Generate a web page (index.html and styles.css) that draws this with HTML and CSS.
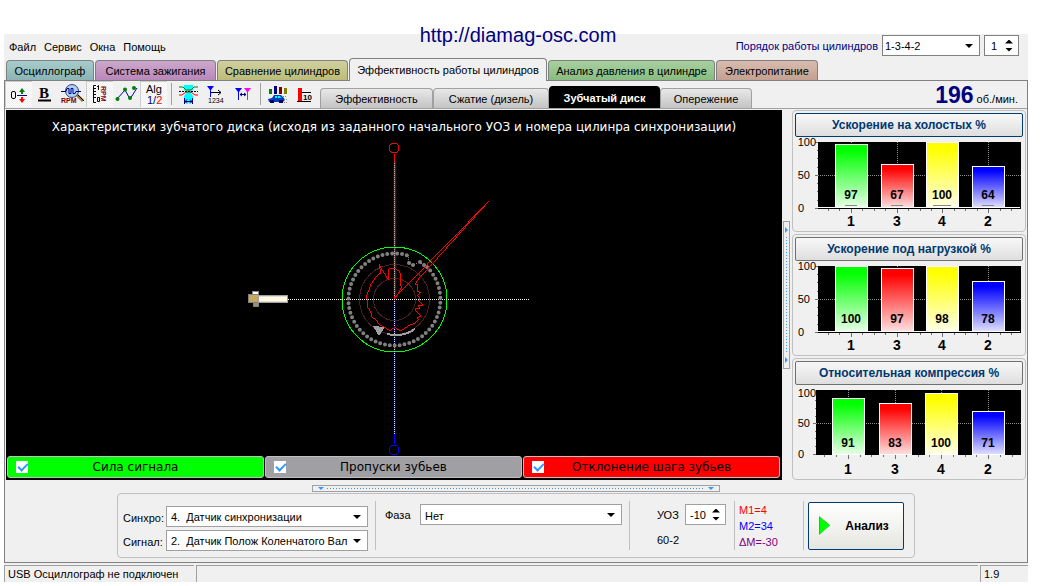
FILE: index.html
```html
<!DOCTYPE html>
<html lang="ru">
<head>
<meta charset="utf-8">
<title>Диагностика двигателя</title>
<link rel="stylesheet" href="styles.css">
</head>
<body>
<a class="site-link" href="http://diamag-osc.com">http://diamag-osc.com</a>
<div class="window">
  <header class="menubar">
    <nav class="menu"><button>Файл</button><button>Сервис</button><button>Окна</button><button>Помощь</button></nav>
    <div class="order">
      <label class="order-label" for="order">Порядок работы цилиндров</label>
      <span class="combo combo-order"><select id="order"><option>1-3-4-2</option></select></span>
      <span class="spin spin-small"><input aria-label="Номер цилиндра" value="1"><span class="steps"><button aria-label="Больше"></button><button class="down" aria-label="Меньше"></button></span></span>
    </div>
  </header>
  <nav class="tabs">
    <button class="tab teal">Осциллограф</button>
    <button class="tab purple">Система зажигания</button>
    <button class="tab olive">Сравнение цилиндров</button>
    <button class="tab current">Эффективность работы цилиндров</button>
    <button class="tab green">Анализ давления в цилиндре</button>
    <button class="tab brown">Электропитание</button>
  </nav>
  <main class="frame">
    <div class="toolbar">
      <div class="tools">
        <button class="tool pressed" aria-label="Ноль"><svg viewBox="0 0 27 26"><g fill="none" stroke="#000"><rect x="6.500" y="10.500" width="4" height="7" rx="1.500"/></g><path d="M12 14.500h10" stroke="#000080"/><path d="M14 11l3-4 3 4h-2v2h-2v-2z" fill="#008000"/><path d="M14 18l3 4 3-4h-2v-2h-2v2z" fill="#f00"/></svg></button>
        <button class="tool" aria-label="Жирный"><svg viewBox="0 0 27 26"><text class="icon-bold" x="7" y="17">B</text><path d="M6 19.500h13" stroke="#000" stroke-width="2"/></svg></button>
        <button class="tool" aria-label="Обороты"><svg viewBox="0 0 27 26"><path d="M18 14l6 6" stroke="#a08020" stroke-width="3"/><path d="M19 14l6 6" stroke="#000" /><circle cx="13" cy="10" r="6.500" fill="#a8d0ff" stroke="#404060"/><path d="M2 10.500h5l1-3h2v5h2v-5h2v5h2l1-2h5" fill="none" stroke="#000080"/><text class="icon-rpm" x="2" y="22">RPM</text></svg></button>
        <button class="tool pressed" aria-label="Шкала оборотов"><svg viewBox="0 0 27 26"><path d="M10 4.500H7.500v17H10M8 7.500h2M8 10.500h2M8 13.500h2M8 16.500h2" fill="none" stroke="#000"/><path d="M11 6l1.500-1.500V9M11.500 16.500h2v4h-2z" fill="none" stroke="#000"/><text class="icon-rpm" transform="translate(15 5) rotate(90)">RPM</text></svg></button>
        <button class="tool" aria-label="График"><svg viewBox="0 0 27 26"><path d="M4 18l8-9 5 9 7-11" fill="none" stroke="#0000c0"/><g fill="#008000"><circle cx="4.500" cy="18" r="2"/><circle cx="12" cy="8.500" r="2"/><circle cx="17" cy="17" r="2"/><circle cx="21" cy="7" r="2"/></g></svg></button>
        <button class="tool pressed" aria-label="Алгоритм"><svg viewBox="0 0 27 26"><text class="icon-alg" x="6" y="12">Alg</text><text class="icon-alg navy" x="7" y="23">1/<tspan fill="#f00">2</tspan></text></svg></button>
        <i class="divider"></i>
        <button class="tool" aria-label="Интервал"><svg viewBox="0 0 27 26"><path d="M9 4h9v5l-2 3 2 3v7H9v-7l2-3-2-3z" fill="#0ff"/><path d="M4 6h4l3 3h5l3-3h4" fill="none" stroke="#008000"/><path d="M4 10.500h19" stroke="#000" stroke-dasharray="2 1"/><path d="M4 14h3l4-3h5l4 3h3" fill="none" stroke="#f00"/><path d="M9.500 17v6M17.500 17v6M10 20.500h7M12 18.500l-2 2 2 2M15 18.500l2 2-2 2" fill="none" stroke="#000080"/></svg></button>
        <button class="tool" aria-label="Нумерация"><svg viewBox="0 0 27 26"><path d="M5 5h7l-3 4v7H8V9z" fill="#00f"/><path d="M9 11.500h10M16 9l3 2.500-3 2.500" fill="none" stroke="#000"/><text class="icon-num" x="6" y="22">1234</text></svg></button>
        <button class="tool" aria-label="Расстояние"><svg viewBox="0 0 27 26"><path d="M6 7h7l-3 4v8H9v-8z" fill="#00f"/><path d="M15 7h7l-3 4v8h-1v-8z" fill="#f0f"/><path d="M11 13.500h6M13 12l-2 1.500 2 1.500M15 12l2 1.500-2 1.500" stroke="#000080" fill="none"/></svg></button>
        <i class="divider"></i>
        <button class="tool" aria-label="Автомобиль"><svg viewBox="0 0 27 26"><path d="M5 8h3v5H5z" fill="#008000"/><path d="M10 5h3v8h-3z" fill="#000080"/><path d="M15 6h3v7h-3z" fill="#800000"/><path d="M20 7h3v6h-3z" fill="#808000"/><path d="M4 18l4-1 2-3h7l3 3 1 2-2 2H5z" fill="#0040c0"/><path d="M11 15h2v2h-2zm3 0h2l1 2h-3z" fill="#0ff"/><path d="M6 19h4v3H6zm9 0h4v3h-4z" fill="#000060"/><path d="M19 15.500h4M20 18.500h4M20 21.500h4" stroke="#888" stroke-dasharray="1 1"/></svg></button>
        <button class="tool" aria-label="Уровень"><svg viewBox="0 0 27 26"><path d="M7 7h4v13H7z" fill="#f00"/><path d="M11 11.500h9M6 20.500h14" stroke="#000"/><text class="icon-ten" x="12" y="19">10</text></svg></button>
      </div>
      <nav class="subtabs">
        <button class="subtab">Эффективность</button>
        <button class="subtab">Сжатие (дизель)</button>
        <button class="subtab selected">Зубчатый диск</button>
        <button class="subtab">Опережение</button>
      </nav>
      <output class="rpm"><b>196</b> об./мин.</output>
    </div>
    <div class="work">
      <section class="scope">
        <h1>Характеристики зубчатого диска (исходя из заданного начального УОЗ и номера цилинра синхронизации)</h1>
        <svg class="disk" viewBox="246 138 296 318" role="img" aria-label="Зубчатый диск" shape-rendering="crispEdges" fill="none">
          <circle cx="394.500" cy="299.500" r="35" stroke="#482020"/>
          <circle cx="394.500" cy="299.500" r="21" stroke="#482020"/>
          <circle cx="394.500" cy="299.500" r="52.500" stroke="#0f0"/>
          <path d="M394.500 154v145" stroke="#f00"/>
          <path d="M394.500 163v136" stroke="#0ff" stroke-dasharray="1 1"/>
          <path d="M394.500 299v145" stroke="#00f"/>
          <path d="M394.500 299v136" stroke="#ff0" stroke-dasharray="1 1"/>
          <path d="M288 299.500h242" stroke="#fff" stroke-dasharray="1 1"/>
          <circle cx="394" cy="148" r="5" stroke="#f00"/>
          <circle cx="394" cy="450" r="5" stroke="#00f"/>
          <path d="M427 267A46 46 0 1 1 407.600 255.400" stroke="#808080" stroke-width="4" stroke-linecap="round" stroke-dasharray="0 4.900" shape-rendering="auto"/>
          <path d="M408 255l1 8 4 2 7-3 4 3" stroke="#808080" stroke-dasharray="1 1"/>
          <path d="M409 263h.1M413 265h.1M420 262h.1M424 265h.1" stroke="#808080" stroke-width="4" stroke-linecap="round" shape-rendering="auto"/>
          <path d="M415 329c-8 6-18 7-28 5" stroke="#a0a0a4" stroke-width="2"/>
          <path d="M373 326l12 1-6 9z" fill="#a0a0a4"/>
          <g transform="translate(330 235) scale(.33333)"><polyline stroke="#f00" stroke-width="3" points="194,192 207,172 215,155 210,150 212,118 207,108 196,101 176,101 176,136 152,97 148,86 152,115 145,118 133,132 122,150 112,178 108,185 114,200 114,218 122,232 126,245 140,258 150,270 165,278 180,286 195,278 210,288 225,280 240,270 255,265 265,255 262,248 272,243 254,222 270,222 264,212 280,210 266,197 270,190 262,182 272,172 262,170 263,150 256,150 262,136 477,-102 194,188"/></g>
          <path d="M252 291h6v3h-6z" fill="#fff" stroke="#888"/>
          <path d="M248.500 294.500h10v8h-10z" fill="#c8a860" stroke="#808080"/>
          <path d="M253.500 302.500h5v4h-5z" fill="#a09070" stroke="#808080"/>
          <path d="M258.500 295.500h29v7h-29z" fill="#fffae0" stroke="#a0a0a0"/>
          <path d="M259 296.500h28M259 301.500h28" stroke="#ddd"/>
        </svg>
        <div class="legend">
          <label class="signal"><input type="checkbox" checked><span>Сила сигнала</span></label>
          <label class="gaps"><input type="checkbox" checked><span>Пропуски зубьев</span></label>
          <label class="pitch"><input type="checkbox" checked><span>Отклонение шага зубьев</span></label>
        </div>
      </section>
      <div class="splitter-v"><i></i></div>
      <aside class="charts">
        <section class="card">
          <button class="card-title focus">Ускорение на холостых %</button>
          <svg class="chart" viewBox="0 0 228 92" role="img" aria-label="Ускорение на холостых">
            <defs>
              <linearGradient id="g" x2="0" y2="1"><stop offset=".1" stop-color="#0f0"/><stop offset="1" stop-color="#e8ffe8"/></linearGradient>
              <linearGradient id="r" x2="0" y2="1"><stop offset=".1" stop-color="#f00"/><stop offset="1" stop-color="#ffe0e0"/></linearGradient>
              <linearGradient id="y" x2="0" y2="1"><stop offset=".1" stop-color="#ff0"/><stop offset="1" stop-color="#ffffe8"/></linearGradient>
              <linearGradient id="b" x2="0" y2="1"><stop offset=".1" stop-color="#00f"/><stop offset="1" stop-color="#e0e0ff"/></linearGradient>
              <g id="axes"><path d="M23 3h203v67H23z"/><path d="M23 36.500h203M56.500 3v66M102.500 3v66M147.500 3v66M193.500 3v66" class="grid"/><path d="M20 3.500h3M20 36.500h3M20 69.500h3M22 11.500h1M22 19.500h1M22 28.500h1M22 44.500h1M22 52.500h1M22 61.500h1M33.500 70v2M44.500 70v2M56.500 70v4M67.500 70v2M79.500 70v2M90.500 70v2M102.500 70v4M113.500 70v2M125.500 70v2M136.500 70v2M147.500 70v4M159.500 70v2M170.500 70v2M182.500 70v2M193.500 70v4M205.500 70v2M216.500 70v2" class="ticks"/><path d="M23 68.500h202" stroke="#fff"/></g>
              <g id="scale" class="scale"><text x="21" y="7">100</text><text x="15" y="40">50</text><text x="9" y="73">0</text></g>
            </defs>
            <use href="#axes"/><use href="#scale"/>
            <g class="bars"><rect x="40.500" y="5.500" width="32" height="63" fill="url(#g)"/><rect x="86.500" y="25.500" width="32" height="43" fill="url(#r)"/><rect x="131.500" y="3.500" width="32" height="65" fill="url(#y)"/><rect x="177.500" y="27.500" width="32" height="41" fill="url(#b)"/></g>
            <g class="values"><text x="56" y="60">97</text><text x="102" y="60">67</text><text x="147" y="60">100</text><text x="193" y="60">64</text></g>
            <path d="M50 66.500h12M96 66.500h12M138 66.500h18M187 66.500h12" stroke="#888"/>
            <g class="names"><text x="56" y="87">1</text><text x="102" y="87">3</text><text x="147" y="87">4</text><text x="193" y="87">2</text></g>
          </svg>
        </section>
        <section class="card">
          <button class="card-title">Ускорение под нагрузкой %</button>
          <svg class="chart" viewBox="0 0 228 92" role="img" aria-label="Ускорение под нагрузкой">
            <use href="#axes"/><use href="#scale"/>
            <g class="bars"><rect x="40.500" y="3.500" width="32" height="65" fill="url(#g)"/><rect x="86.500" y="5.500" width="32" height="63" fill="url(#r)"/><rect x="131.500" y="3.500" width="32" height="65" fill="url(#y)"/><rect x="177.500" y="18.500" width="32" height="50" fill="url(#b)"/></g>
            <g class="values"><text x="56" y="60">100</text><text x="102" y="60">97</text><text x="147" y="60">98</text><text x="193" y="60">78</text></g>
            <g class="names"><text x="56" y="87">1</text><text x="102" y="87">3</text><text x="147" y="87">4</text><text x="193" y="87">2</text></g>
          </svg>
        </section>
        <section class="card">
          <button class="card-title">Относительная компрессия %</button>
          <svg class="chart" viewBox="0 0 228 92" role="img" aria-label="Относительная компрессия">
            <path d="M21 3h205v65H21z"/><path d="M21 36.500h205M53.500 3v64M100.500 3v64M146.500 3v64M193.500 3v64" class="grid"/>
            <path d="M18 36.500h3M18 67.500h3M20 13.500h1M20 21.500h1M20 29.500h1M20 44.500h1M20 51.500h1M20 59.500h1M29.500 68v2M41.500 68v2M53.500 68v4M65.500 68v2M76.500 68v2M88.500 68v2M100.500 68v4M111.500 68v2M123.500 68v2M134.500 68v2M146.500 68v4M158.500 68v2M170.500 68v2M181.500 68v2M193.500 68v4M205.500 68v2M217.500 68v2" class="ticks"/>
            <g class="scale"><text x="21" y="10">100</text><text x="15" y="40">50</text><text x="9" y="71">0</text></g>
            <g class="bars"><rect x="37.500" y="11.500" width="32" height="56" fill="url(#g)"/><rect x="84.500" y="16.500" width="32" height="51" fill="url(#r)"/><rect x="130.500" y="6.500" width="32" height="61" fill="url(#y)"/><rect x="177.500" y="24.500" width="32" height="43" fill="url(#b)"/></g>
            <g class="values"><text x="53" y="60">91</text><text x="100" y="60">83</text><text x="146" y="60">100</text><text x="193" y="60">71</text></g>
            <g class="names"><text x="53" y="87">1</text><text x="100" y="87">3</text><text x="146" y="87">4</text><text x="193" y="87">2</text></g>
          </svg>
        </section>
      </aside>
    </div>
    <div class="splitter-h"><i></i></div>
    <form class="settings">
      <div class="sources">
        <label for="sync">Синхро:</label><span class="combo"><select id="sync"><option>4.&nbsp; Датчик синхронизации</option></select></span>
        <label for="sig">Сигнал:</label><span class="combo"><select id="sig"><option>2.&nbsp; Датчик Полож Коленчатого Вал</option></select></span>
      </div>
      <div class="phase"><label for="phase">Фаза</label><span class="combo"><select id="phase"><option>Нет</option></select></span></div>
      <div class="angle">
        <label for="uoz">УОЗ</label><span class="spin"><input id="uoz" value="-10"><span class="steps"><button type="button" aria-label="Больше"></button><button type="button" class="down" aria-label="Меньше"></button></span></span>
        <span>60-2</span>
      </div>
      <div class="marks"><span class="m1">M1=4</span><span class="m2">M2=34</span><span class="dm">ΔM=-30</span></div>
      <div class="action"><button type="button" class="run"><svg viewBox="0 0 12 20"><path d="M0 0l11 9-11 10z" fill="#808080"/><path d="M1 1l10 8.500L1 18z" fill="#0f0"/></svg><span>Анализ</span></button></div>
    </form>
  </main>
  <footer class="status"><span class="state">USB Осциллограф не подключен</span><span class="blank"></span><span class="version">1.9</span></footer>
</div>
</body>
</html>
```
FILE: styles.css
```css
* { box-sizing: border-box; }
body { margin: 0; background: #fff; color: #000; font: 11px/14px "Liberation Sans", Arial, sans-serif; }
button, input, select { margin: 0; padding: 0; border: 0; background: none; color: inherit; font: inherit; }
svg { display: block; }

.site-link { position: absolute; top: 23px; left: 0; right: 4px; text-align: center; color: navy; font-size: 20px; line-height: 24px; text-decoration: none; pointer-events: none; }
.window { margin: 34px 12px 0 4px; background: #f0f0f0; }

.menubar { display: flex; justify-content: space-between; height: 24px; padding: 0 9px 0 5px; }
.menu { display: flex; align-items: center; gap: 8px; padding-top: 2px; }
.order { display: flex; align-items: flex-start; gap: 4px; padding-top: 1px; }
.order-label { color: navy; line-height: 22px; }

.combo { position: relative; display: block; width: 202px; height: 21px; border: 1px solid #a0a0a0; background: #fff; }
.combo::after { content: ""; position: absolute; right: 6px; top: 8px; border: 4px solid transparent; border-top: 4px solid #000; border-bottom: 0; pointer-events: none; }
.combo select { width: 100%; height: 100%; padding: 0 19px 0 4px; appearance: none; outline: 0; }
.combo-order { width: 98px; border-color: #808080; }
.combo-order select { padding-left: 2px; }
.spin { display: flex; width: 41px; height: 21px; border: 1px solid #a0a0a0; background: #fff; }
.spin input { flex: 1; width: 0; padding-left: 4px; outline: 0; }
.spin-small { width: 35px; border-color: #808080; }
.spin-small input { padding-left: 6px; }
.steps { display: flex; flex-direction: column; justify-content: center; gap: 4px; width: 13px; }
.steps button { width: 8px; height: 4px; background: #000; clip-path: polygon(50% 0, 100% 100%, 0 100%); }
.steps .down { clip-path: polygon(0 0, 100% 0, 50% 100%); }

.tabs { display: grid; grid-template-columns: 88px 121px 131px 198px 167px 102px; column-gap: 1px; align-items: end; height: 22px; padding-left: 2px; }
.tab { height: 20px; border: 1px solid #808080; border-bottom: 0; border-radius: 4px 4px 0 0; white-space: nowrap; }
.tab.current { position: relative; height: 23px; margin-bottom: -1px; background: #f0f0f0; }
.teal { background: linear-gradient(#a8cccc, #8cb4b4); }
.purple { background: linear-gradient(#cca8cc, #b888b8); }
.olive { background: linear-gradient(#d0d0a0, #bcbc78); }
.green { background: linear-gradient(#a8d0a0, #88bc80); }
.brown { background: linear-gradient(#d8bcb0, #c4a090); }

.frame { border: 1px solid #808080; padding-bottom: 4px; }
.toolbar { display: flex; height: 28px; padding-right: 9px; border-bottom: 1px solid #a0a0a0; }
.tools { display: flex; }
.tool { width: 27px; height: 26px; }
.tool svg { width: 27px; height: 26px; }
.pressed { background: repeating-conic-gradient(#fff 0 25%, #eee 0 50%) 0 0 / 2px 2px; box-shadow: inset 1px 1px #ccc; }
.divider { width: 1px; height: 22px; margin: 2px 3px 0 4px; background: #a0a0a0; }
.icon-bold { font: bold 15px "Liberation Serif", serif; }
.icon-rpm { font: bold 7px "Liberation Sans", sans-serif; fill: maroon; }
.icon-alg { font: 11px "Liberation Sans", sans-serif; }
.icon-alg.navy { fill: navy; }
.icon-num { font: 7px "Liberation Sans", sans-serif; }
.icon-ten { font: bold 8px "Liberation Sans", sans-serif; }
.subtabs { display: grid; grid-template-columns: 113px 116px 111px 92px; align-items: end; margin-left: 2px; height: 27px; }
.subtab { height: 20px; border: 1px solid #a0a0a0; border-bottom: 0; border-radius: 4px 4px 0 0; background: linear-gradient(#e8e8e8, #c4c4c4); white-space: nowrap; }
.subtab.selected { height: 22px; border-color: #000; background: #000; color: #fff; font-weight: bold; }
.rpm { margin-left: auto; line-height: 28px; white-space: nowrap; }
.rpm b { color: navy; font-size: 23px; }

.work { display: flex; align-items: stretch; height: 371px; padding: 1px 1px 0; }
.scope { flex: 1; min-width: 0; display: flex; flex-direction: column; background: #000; }
.scope h1 { margin: 9px 0 0; color: #fff; font: 12px/16px "DejaVu Sans", Verdana, sans-serif; text-align: center; white-space: nowrap; overflow: hidden; }
.disk { flex: 1; min-height: 0; width: 100%; margin-top: 3px; }
.legend { display: flex; gap: 1px; height: 24px; padding: 0 2px 2px 1px; font: 12px/20px "DejaVu Sans", Verdana, sans-serif; }
.legend label { flex: 1; display: flex; align-items: center; padding: 0 8px; border: 1px solid #c0c0c0; border-radius: 3px; }
.legend span { flex: 1; padding-right: 12px; text-align: center; white-space: nowrap; }
.legend input { width: 12px; height: 12px; appearance: none; background: #fff; }
.legend input:checked::after { content: ""; display: block; width: 8px; height: 4px; margin: 2px; border: solid #39f; border-width: 0 0 2px 2px; transform: rotate(-45deg); }
.signal { background: #0f0; }
.gaps { background: #a0a0a4; }
.pitch { background: #f00; }

.splitter-v { display: flex; align-items: center; width: 10px; padding-left: 1px; }
.splitter-v i { display: flex; flex-direction: column; align-items: center; justify-content: space-between; width: 7px; height: 148px; padding: 5px 0; border: 1px solid #a0a0a0; background: repeating-linear-gradient(#39f 0 1px, transparent 1px 3px) center / 1px 116px no-repeat; }
.splitter-v i::before, .splitter-v i::after { content: ""; border: 3px solid transparent; border-left-color: #39f; border-right: 0; }
.charts { display: flex; flex-direction: column; gap: 2px; width: 234px; }
.card { height: 122px; padding: 2px; border: 1px solid #c0c0c0; border-radius: 4px; }
.card-title { display: block; width: 100%; height: 24px; border: 1px solid #707070; border-radius: 2px; background: linear-gradient(#f8f8f8, #dedede); color: #003870; font-size: 12px; font-weight: bold; }
.card-title.focus { border-color: #003c74; }
.chart { width: 100%; height: 92px; margin-top: 2px; overflow: visible; }
.grid { stroke: #909090; stroke-dasharray: 1 1; }
.ticks { stroke: #707070; }
.bars { stroke: #fff; }
.scale { font-size: 11px; text-anchor: end; }
.values { font-size: 12px; font-weight: bold; text-anchor: middle; }
.names { font-size: 14px; font-weight: bold; text-anchor: middle; }

.splitter-h { display: flex; justify-content: center; padding: 5px 0 1px; }
.splitter-h i { display: flex; align-items: center; justify-content: space-between; width: 408px; height: 7px; padding: 0 5px; border: 1px solid #a0a0a0; background: repeating-linear-gradient(90deg, #39f 0 1px, transparent 1px 3px) center / 378px 1px no-repeat; }
.splitter-h i::before, .splitter-h i::after { content: ""; border: 3px solid transparent; border-top-color: #39f; border-bottom: 0; }

.settings { display: flex; align-items: center; width: fit-content; height: 65px; margin: 0 auto; border: 1px solid #c0c0c0; border-radius: 4px; }
.settings > div { height: 49px; }
.settings > div + div { border-left: 1px solid #c0c0c0; }
.sources { display: grid; grid-template-columns: 43px 202px; align-items: center; row-gap: 3px; width: 257px; padding: 5px 0 0 5px; }
.sources label { padding-top: 2px; }
.phase { display: flex; align-items: flex-start; width: 254px; padding: 3px 0 0 9px; line-height: 22px; }
.phase label { width: 35px; }
.angle { display: grid; grid-template-columns: 28px 41px; row-gap: 3px; width: 105px; padding: 3px 0 0 27px; line-height: 22px; }
.marks { display: flex; flex-direction: column; justify-content: center; width: 69px; padding-left: 4px; line-height: 16px; }
.m1 { color: red; }
.m2 { color: blue; }
.dm { color: purple; }
.action { display: flex; align-items: center; width: 111px; padding-left: 4px; }
.run { display: flex; align-items: center; width: 96px; height: 48px; padding-left: 10px; border: 1px solid #003c74; border-radius: 2px; background: linear-gradient(#fff, #e6e6e0); font-size: 12px; font-weight: bold; }
.run svg { width: 12px; height: 20px; }
.run span { flex: 1; text-align: center; }

.status { display: flex; gap: 2px; height: 19px; padding-top: 2px; line-height: 16px; }
.status span { padding-left: 3px; border-top: 1px solid #a0a0a0; border-left: 1px solid #a0a0a0; }
.state { width: 190px; white-space: nowrap; }
.blank { flex: 1; }
.version { width: 48px; }
```
